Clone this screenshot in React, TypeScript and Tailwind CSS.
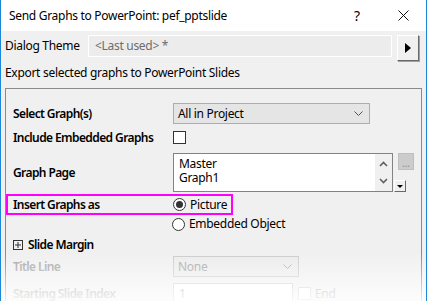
import React from "react";

// Chevron used by the combo boxes
function ComboChevron({ color }: { color: string }) {
  return (
    <svg width="9" height="5" viewBox="0 0 9 5" className="shrink-0">
      <path d="M0.5 0.5 L4.5 4.5 L8.5 0.5" fill="none" stroke={color} strokeWidth="1" />
    </svg>
  );
}

function Radio({ checked }: { checked?: boolean }) {
  return (
    <span className="w-[13px] h-[13px] rounded-full border border-[#333333] bg-white flex items-center justify-center shrink-0">
      {checked && <span className="w-[7px] h-[7px] rounded-full bg-[#333333]" />}
    </span>
  );
}

export default function App() {
  return (
    <div className="relative w-[427px] h-[301px] overflow-hidden bg-[#f0f0f0] border-x border-[#1c86d9] text-[12px] leading-[16px] tracking-[-0.3px] text-black font-['Segoe_UI','Noto_Sans',sans-serif]">
      {/* title bar */}
      <div className="h-[31px] bg-white flex items-center pl-[8px]">
        <span className="flex-1">Send Graphs to PowerPoint: pef_pptslide</span>
        <span className="w-[46px] text-center text-[14px]">?</span>
        <span className="w-[46px] flex justify-center">
          <svg width="11" height="11" viewBox="0 0 11 11">
            <path d="M0.5 0.5 L10.5 10.5 M10.5 0.5 L0.5 10.5" stroke="#111" strokeWidth="1" />
          </svg>
        </span>
      </div>

      {/* dialog theme */}
      <div className="flex items-start pt-[4px] pl-[4px] h-[34px]">
        <span className="w-[83px] pt-[3px]">Dialog Theme</span>
        <div className="w-[304px] h-[22px] border border-white bg-[#ececec] text-[#6d6d6d] pl-[6px] flex items-center">
          &lt;Last used&gt; *
        </div>
        <button className="ml-[5px] w-[22px] h-[26px] bg-[#f0f0f0] border border-t-white border-l-white border-r-[#696969] border-b-[#696969] shadow-[1px_1px_0_#a0a0a0] flex items-center justify-center">
          <svg width="6" height="10" viewBox="0 0 6 10">
            <path d="M0 0 L6 5 L0 10 Z" fill="#000" />
          </svg>
        </button>
      </div>

      <div className="pl-[4px] h-[23px]">Export selected graphs to PowerPoint Slides</div>

      {/* group box */}
      <div className="ml-[4px] w-[417px] h-[220px] border border-[#8a8a8a] font-semibold tracking-[-0.6px]">
        {/* select graphs */}
        <div className="flex items-center mt-[14px] h-[21px]">
          <span className="w-[167px] pl-[7px]">Select Graph(s)</span>
          <div className="w-[197px] h-[21px] bg-[#e5e5e5] border border-[#adadad] flex items-center pl-[4px] pr-[6px] font-normal tracking-[-0.3px]">
            <span className="flex-1">All in Project</span>
            <ComboChevron color="#555555" />
          </div>
        </div>

        {/* include embedded */}
        <div className="flex items-center mt-[7px] h-[13px]">
          <span className="w-[167px] pl-[7px]">Include Embedded Graphs</span>
          <span className="w-[13px] h-[13px] border border-[#333333] bg-white" />
        </div>

        {/* graph page */}
        <div className="flex items-center mt-[9px] h-[39px]">
          <span className="w-[167px] pl-[7px]">Graph Page</span>
          <div className="w-[220px] h-[39px] border border-[#828282] bg-white flex font-normal tracking-[-0.3px]">
            <div className="flex-1 pl-[5px] pt-[3px]">
              <div className="h-[14px] leading-[14px]">Master</div>
              <div className="h-[14px] leading-[14px]">Graph1</div>
            </div>
            <div className="w-[17px] bg-[#f0f0f0] flex flex-col items-center justify-between py-[7px]">
              <svg width="9" height="6" viewBox="0 0 9 6">
                <path d="M1 5 L4.5 1.5 L8 5" fill="none" stroke="#606060" strokeWidth="1.6" />
              </svg>
              <svg width="9" height="6" viewBox="0 0 9 6">
                <path d="M1 1 L4.5 4.5 L8 1" fill="none" stroke="#606060" strokeWidth="1.6" />
              </svg>
            </div>
          </div>
          <div className="self-stretch flex flex-col justify-between ml-[1px]">
            <div className="ml-[4px] w-[16px] h-[17px] bg-[#cccccc] border border-[#bfbfbf] flex items-end justify-center text-[#8a8a8a] text-[10px] leading-[12px] font-normal tracking-normal">
              ...
            </div>
            <div className="w-[12px] h-[12px] bg-[#f0f0f0] border border-t-white border-l-white border-r-[#696969] border-b-[#696969] flex items-center justify-center">
              <svg width="6" height="3" viewBox="0 0 6 3">
                <path d="M0 0 L6 0 L3 3 Z" fill="#000" />
              </svg>
            </div>
          </div>
        </div>

        {/* insert graphs as (highlighted) */}
        <div className="flex items-center mt-[2px] w-[227px] h-[21px] border-2 border-[#ff00ff]">
          <span className="w-[165px] pl-[5px]">Insert Graphs as</span>
          <Radio checked />
          <span className="ml-[4px] font-normal tracking-[-0.3px]">Picture</span>
        </div>

        {/* embedded object */}
        <div className="flex items-center mt-[2px] h-[14px] pl-[166px] font-normal tracking-[-0.3px]">
          <Radio />
          <span className="ml-[4px]">Embedded Object</span>
        </div>

        {/* slide margin */}
        <div className="flex items-center mt-[7px] h-[14px] pl-[7px]">
          <span className="w-[10px] h-[10px] border border-[#333333] flex items-center justify-center">
            <svg width="6" height="6" viewBox="0 0 6 6">
              <path d="M0 3 H6 M3 0 V6" stroke="#333" strokeWidth="1" />
            </svg>
          </span>
          <span className="ml-[5px]">Slide Margin</span>
        </div>

        {/* title line (disabled) */}
        <div className="flex items-center mt-[4px] h-[21px] text-[#a6a6a6]">
          <span className="w-[167px] pl-[7px]">Title Line</span>
          <div className="w-[126px] h-[21px] bg-[#ececec] border border-[#cccccc] flex items-center pl-[4px] pr-[6px] font-normal tracking-[-0.3px]">
            <span className="flex-1">None</span>
            <ComboChevron color="#b0b0b0" />
          </div>
        </div>

        {/* starting slide index (disabled) */}
        <div className="flex items-center mt-[6px] h-[21px] text-[#a6a6a6]">
          <span className="w-[167px] pl-[7px]">Starting Slide Index</span>
          <div className="w-[120px] h-[21px] bg-white border border-[#cccccc] pl-[5px] font-normal flex items-center">1</div>
          <span className="ml-[5px] w-[13px] h-[13px] border border-[#cccccc] bg-white" />
          <span className="ml-[4px] font-normal tracking-[-0.3px]">End</span>
        </div>
      </div>

      {/* faded bottom edge */}
      <div className="absolute left-0 right-0 bottom-0 h-[48px] bg-linear-to-b from-white/0 to-white/85 pointer-events-none" />
    </div>
  );
}
